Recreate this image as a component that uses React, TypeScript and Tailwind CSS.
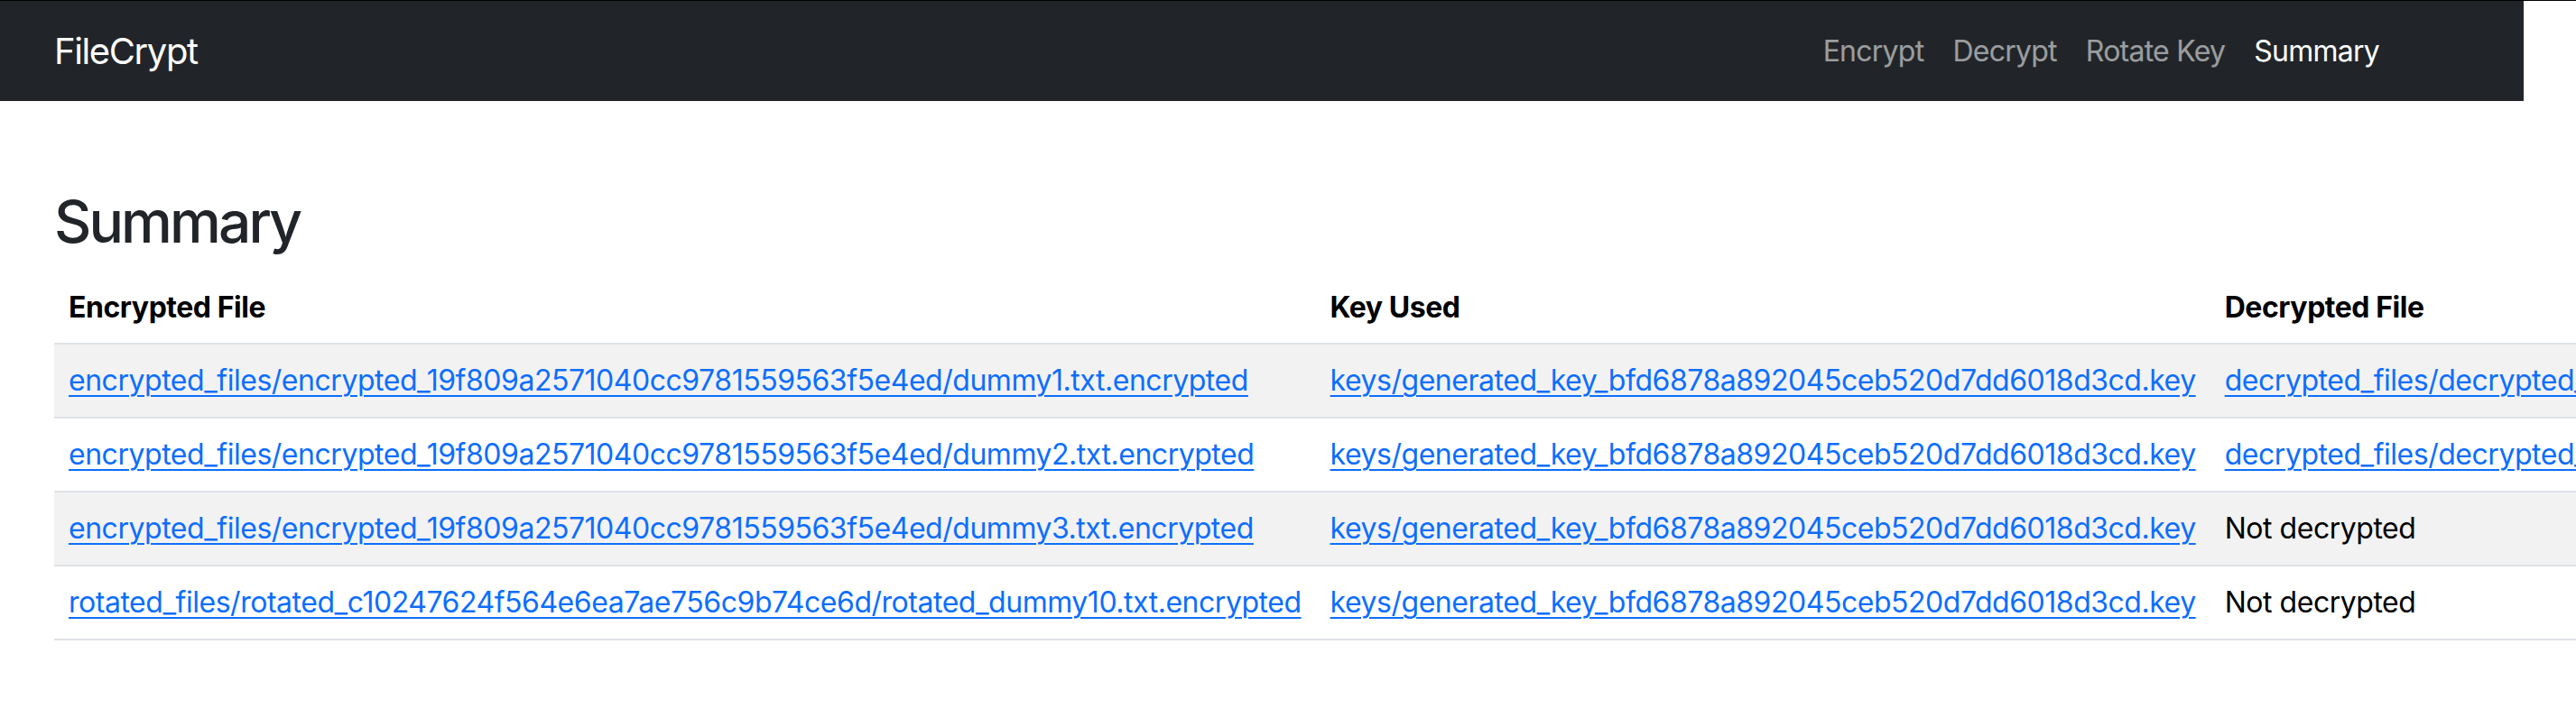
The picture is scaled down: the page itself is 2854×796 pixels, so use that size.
const rows = [
  {
    file: 'encrypted_files/encrypted_19f809a2571040cc9781559563f5e4ed/dummy1.txt.encrypted',
    key: 'keys/generated_key_bfd6878a892045ceb520d7dd6018d3cd.key',
    decrypted: 'decrypted_files/decrypted_19f809a2571040cc9781559563f5e4ed/dummy1.txt',
  },
  {
    file: 'encrypted_files/encrypted_19f809a2571040cc9781559563f5e4ed/dummy2.txt.encrypted',
    key: 'keys/generated_key_bfd6878a892045ceb520d7dd6018d3cd.key',
    decrypted: 'decrypted_files/decrypted_19f809a2571040cc9781559563f5e4ed/dummy2.txt',
  },
  {
    file: 'encrypted_files/encrypted_19f809a2571040cc9781559563f5e4ed/dummy3.txt.encrypted',
    key: 'keys/generated_key_bfd6878a892045ceb520d7dd6018d3cd.key',
    decrypted: null,
  },
  {
    file: 'rotated_files/rotated_c10247624f564e6ea7ae756c9b74ce6d/rotated_dummy10.txt.encrypted',
    key: 'keys/generated_key_bfd6878a892045ceb520d7dd6018d3cd.key',
    decrypted: null,
  },
];

const navLinks = ['Encrypt', 'Decrypt', 'Rotate Key', 'Summary'];

function Navbar() {
  return (
    <nav className="flex h-[111px] w-[2796px] items-center justify-between bg-[#212529] pl-[60px] pr-[144px]">
      <a href="#" className="text-[40px] leading-[60px] tracking-[-1.4px] text-white">
        FileCrypt
      </a>
      <ul className="flex items-center">
        {navLinks.map((l) => (
          <li key={l}>
            <a
              href="#"
              className={`block px-4 text-[32px] leading-[48px] tracking-[-0.75px] ${
                l === 'Summary' ? 'text-white' : 'text-white/55'
              }`}
            >
              {l}
            </a>
          </li>
        ))}
      </ul>
    </nav>
  );
}

function Cell({ href, text }: { href?: string; text: string }) {
  return (
    <td className="whitespace-nowrap border-b-2 border-[#dee2e6] px-4 py-4">
      {href ? (
        <a href={href} className="text-[#0d6efd] underline decoration-2 underline-offset-[5px]">
          {text}
        </a>
      ) : (
        text
      )}
    </td>
  );
}

export default function App() {
  return (
    <div
      className="min-h-[796px] w-full overflow-hidden border-t border-black bg-white"
      style={{ fontFamily: 'Inter, "Liberation Sans", sans-serif' }}
    >
      <Navbar />
      <main className="pl-[60px] pt-[95px]">
        <h1 className="mb-4 text-[64px] font-medium leading-[77px] tracking-[-2.9px] text-[#212529]">Summary</h1>
        <table className="border-collapse text-left text-[32px] leading-[48px] tracking-[-0.47px] text-black">
          <thead>
            <tr>
              <th className="whitespace-nowrap border-b-2 border-[#dee2e6] px-4 pb-[15px] pt-[17px] font-bold">Encrypted File</th>
              <th className="whitespace-nowrap border-b-2 border-[#dee2e6] px-4 pb-[15px] pt-[17px] font-bold">Key Used</th>
              <th className="whitespace-nowrap border-b-2 border-[#dee2e6] px-4 pb-[15px] pt-[17px] font-bold">Decrypted File</th>
            </tr>
          </thead>
          <tbody>
            {rows.map((r, i) => (
              <tr key={r.file} className={i % 2 === 0 ? 'bg-[#f2f2f2]' : 'bg-white'}>
                <Cell href="#" text={r.file} />
                <Cell href="#" text={r.key} />
                {r.decrypted ? <Cell href="#" text={r.decrypted} /> : <Cell text="Not decrypted" />}
              </tr>
            ))}
          </tbody>
        </table>
      </main>
    </div>
  );
}
